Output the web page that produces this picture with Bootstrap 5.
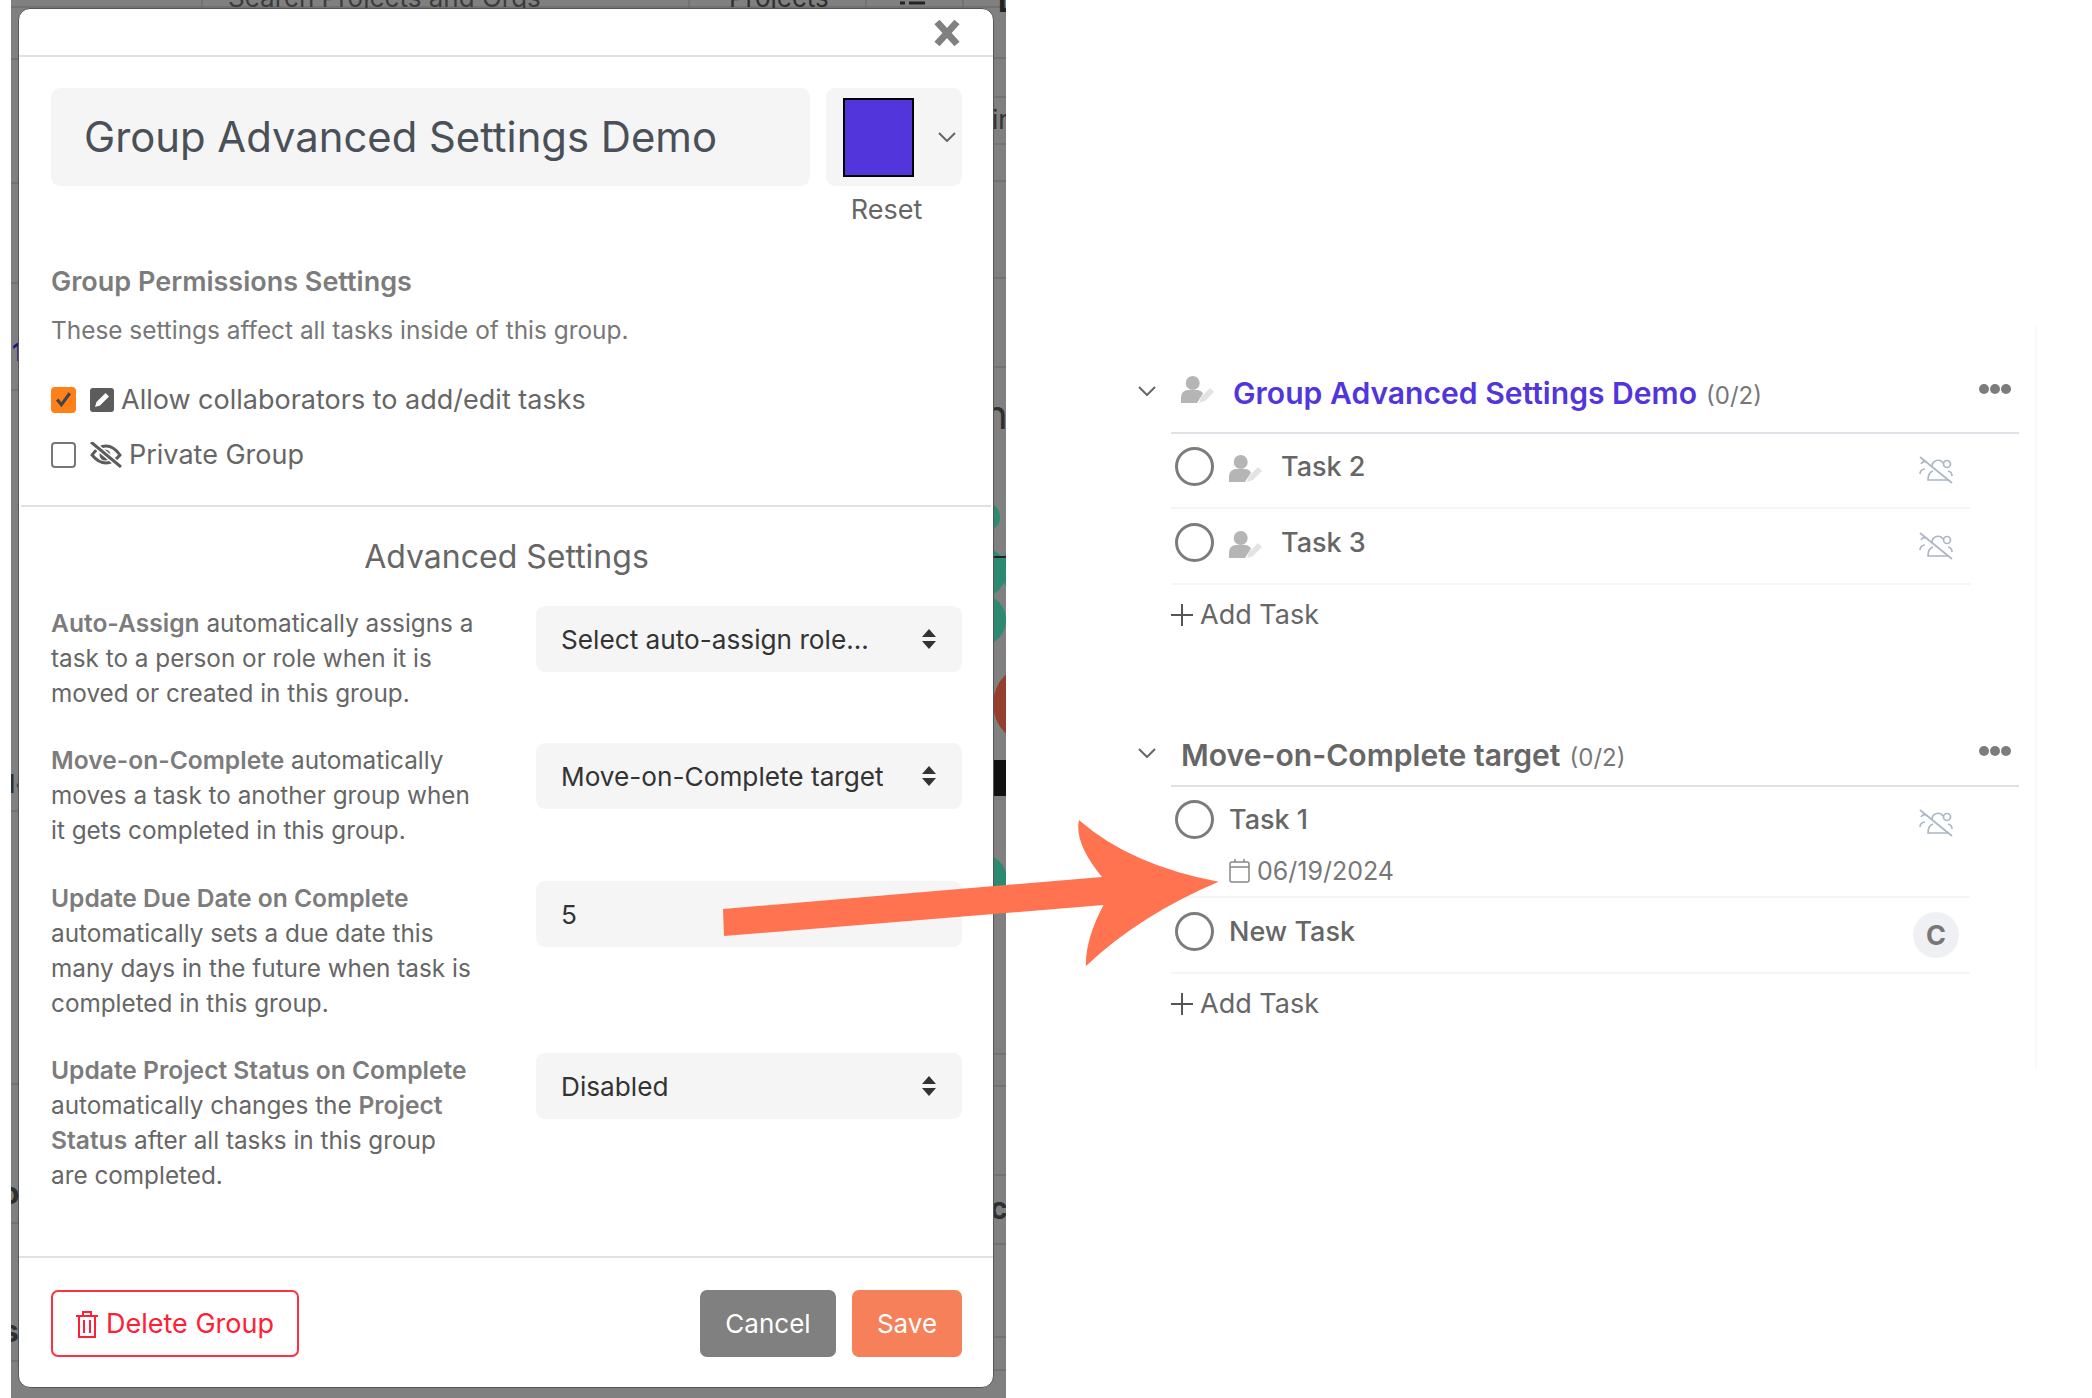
<!DOCTYPE html>
<html lang="en">
<head>
  <meta charset="UTF-8" />
  <meta name="viewport" content="width=device-width, initial-scale=1" />
  <title>Group Advanced Settings</title>
  <link href="https://cdn.jsdelivr.net/npm/bootstrap@5.3.0/dist/css/bootstrap.min.css" rel="stylesheet" />
  <style>
    html, body { height: 1398px; overflow: hidden; }
    body { font-family: Inter, "Liberation Sans", sans-serif; background: #fff; color: #666; font-size: 24.4px; line-height: 35px; }

    /* left half: dimmed page with the modal on top */
    .dim-panel { position: relative; flex: 0 0 995px; height: 1398px; margin-left: 11px; padding: 8px 12px 10px 7px; background: #808080; }
    .dim-art { position: absolute; left: 0; top: 0; width: 995px; height: 1398px; }
    .group-modal { height: 1380px; border: 1px solid #555; border-radius: 12px; background: #fff; overflow: hidden; }
    .group-modal .modal-header { height: 48px; padding: 1px 31px 0 0; justify-content: flex-end; border-bottom: 2px solid #dee2e6; border-radius: 0; }
    .close-x { line-height: 0; }
    .top-section { padding: 31px 31px 0 32px; height: 448px; }
    .title-box { flex: 1 1 auto; height: 98px; padding: 0 33px; background: #f5f5f5; border: 0; border-radius: 9px; color: #495057; font-size: 41.800px; line-height: 98px; }
    .swatch-col { flex: 0 0 136px; }
    .swatch-box { display: flex; align-items: center; height: 98px; padding-left: 17px; background: #f5f5f5; border-radius: 9px; gap: 24px; }
    .swatch-fill { width: 71px; height: 79px; background: #5235db; border: 2px solid #000; }
    .reset-link { margin-top: 6px; padding-right: 15px; text-align: center; font-size: 27px; }
    .perm-title { margin: 37px 0 14px; font-size: 27px; font-weight: 600; color: #7c7c7c; }
    .perm-note { margin-bottom: 34px; color: #777; }
    .perm-line { display: flex; align-items: center; height: 35px; margin-bottom: 20px; font-size: 27px; }
    .perm-line .form-check-input { flex: none; width: 25px; height: 26px; margin: 0 14px 0 0; border: 2px solid #777; border-radius: 4px; }
    .perm-line .form-check-input:checked { background-color: #fd8118; border-color: #fd8118; background-image: url("data:image/svg+xml,%3csvg xmlns='http://www.w3.org/2000/svg' viewBox='0 0 20 20'%3e%3cpath fill='none' stroke='%23444' stroke-width='3' d='M4 10l4 5 8-11'/%3e%3c/svg%3e"); }
    .perm-line label { display: flex; align-items: center; gap: 7px; }
    .adv-section { padding: 32px 29px 0 30px; border-top: 2px solid #dee2e6; margin: 0 2px; }
    .adv-title { margin-bottom: 32px; text-align: center; font-size: 32px; font-weight: 400; color: #666; }
    .setting-row { display: flex; justify-content: space-between; margin-bottom: 32px; }
    .setting-text { width: 425px; color: #666; font-size: 24.3px; line-height: 35.1px; }
    .setting-text b { font-size: 24.6px; line-height: 1; font-weight: 600; color: #7c7c7c; }
    .setting-field.form-select, .setting-field.form-control { flex: 0 0 426px; width: 426px; height: 66px; padding: 2px 25px 0; border: 0; border-radius: 9px; background-color: #f5f5f5; color: #333; font-size: 26.2px; line-height: 64px; }
    .setting-field.form-select { background-position: right 25px center; background-size: 16px 22px; background-image: url("data:image/svg+xml,%3csvg xmlns='http://www.w3.org/2000/svg' viewBox='0 0 16 22'%3e%3cpath fill='%23333' d='M8 1l7 8H1zM8 21l-7-8h14z'/%3e%3c/svg%3e"); }
    .group-modal .modal-footer { height: 131px; padding: 32px 31px 0 32px; align-items: flex-start; justify-content: space-between; border-top: 2px solid #dee2e6; border-radius: 0; --bs-modal-footer-gap: 0; }
    .foot-btn { height: 67px; padding: 0 24px; font-size: 26px; line-height: 1; border-radius: 7px; }
    .foot-delete { display: flex; align-items: center; gap: 7px; width: 248px; padding: 0 0 0 22px; border: 2px solid #ff2f45; color: #ff2036; background: #fff; font-size: 27px; white-space: nowrap; }
    .foot-cancel { width: 136px; background: #808080; border: 0; color: #fff; }
    .foot-save { width: 110px; background: #f5805a; border: 0; color: #fff; }

    /* right half: task groups */
    .board-panel { position: relative; flex: 1 1 auto; padding: 372px 73px 0 132px; }
    .board-edge { position: absolute; left: 1029px; top: 325px; width: 2px; height: 745px; background: #fafafa; }
    .group-chevron { flex: 0 0 33px; height: 42px; }
    .group-head { flex: 1 1 auto; display: flex; align-items: flex-start; padding-left: 10px; border-bottom: 2px solid #dee2e6; }
    .head-first { padding-bottom: 15px; }
    .head-second { padding-bottom: 6px; }
    .group-name { font-size: 30.100px; line-height: 42px; font-weight: 600; color: #666; }
    .name-accent { margin-left: 19px; color: #5235db; }
    .group-count { margin-left: 9px; font-size: 24px; font-weight: 400; color: #777; }
    .more-dots { margin-left: auto; margin-right: 8px; line-height: 0; padding-top: 12px; }
    .task-list { margin-left: 33px; margin-top: -1px; width: 799px; }
    .task-row { display: flex; align-items: flex-start; padding: 14px 17px 20px 4px; border-bottom: 2px solid #f5f5f5; }
    .task-tick { flex: none; width: 39px; height: 39px; border: 3px solid #7c7c7c; border-radius: 50%; }
    .task-name { font-size: 27px; font-weight: 500; line-height: 40px; color: #666; }
    .task-aside { margin-left: auto; padding-top: 9px; line-height: 0; }
    .task-date { display: flex; align-items: center; gap: 7px; margin-top: 13px; margin-bottom: -13px; font-size: 25px; line-height: 36px; color: #777; }
    .task-main { margin-left: 15px; }
    .assignee-glyph { margin: 8px 19px 0 15px; flex: none; }
    .assignee-chip { display: flex; align-items: center; justify-content: center; flex: none; width: 46px; height: 46px; margin: 0 -6px -6px auto; border-radius: 50%; background: #eef0f4; font-size: 27px; font-weight: 700; color: #777; }
    .add-task { display: flex; align-items: center; gap: 7px; margin: 12px 0 101px 33px; font-size: 27px; line-height: 36px; color: #666; }
    .arrow-over { position: absolute; left: 720px; top: 815px; width: 500px; height: 155px; z-index: 5; }
  </style>
</head>
<body>

  <svg width="0" height="0" class="position-absolute">
    <symbol id="ico-assign" viewBox="0 0 33 27">
      <circle cx="11.7" cy="7" r="7" fill="#b5b5b5" />
      <path d="M0 27v-6a7 7 0 0 1 7-7h9a7 7 0 0 1 6 3.500l-6 9.500z" fill="#b5b5b5" />
      <path d="M18 27l2-6 9-9 4 4-9 9z" fill="#e3e3e3" />
    </symbol>
    <symbol id="ico-nobody" viewBox="0 0 34 28">
      <g fill="none" stroke="#aab7c4" stroke-width="1.700">
        <path d="M1 1l32 26" />
        <path d="M13 10a6 6 0 0 1 11-3" />
        <path d="M14 15c-3 1-5 4-5 9h20v-1" />
        <circle cx="28" cy="8" r="3.500" />
        <path d="M29 15a5 5 0 0 1 4 5" />
        <path d="M2 8a4 4 0 0 1 5-2M1 18a5 5 0 0 1 5-5" />
      </g>
    </symbol>
    <symbol id="ico-chevron" viewBox="0 0 18 10">
      <path d="M1 1l8 8 8-8" fill="none" stroke="#666" stroke-width="2" />
    </symbol>
    <symbol id="ico-dots" viewBox="0 0 32 10">
      <circle cx="5" cy="5" r="5" fill="#7c7c7c" />
      <circle cx="16" cy="5" r="5" fill="#7c7c7c" />
      <circle cx="27" cy="5" r="5" fill="#7c7c7c" />
    </symbol>
    <symbol id="ico-plus" viewBox="0 0 22 22">
      <path d="M11 0v22M0 11h22" stroke="#555" stroke-width="2" />
    </symbol>
  </svg>

  <div class="d-flex">
    <div class="dim-panel">
      <!-- page behind the backdrop -->
      <svg class="dim-art" viewBox="11 0 995 1398" font-family="Inter, sans-serif" font-size="26" fill="#2f2f2f">
        <g stroke="#6e6e6e" stroke-width="1.500">
          <path d="M11 7H1006M11 59h8M11 183h8M11 283h8M11 390h8M11 811h8M11 1084h8M11 1223h8M11 1361h8" />
          <path d="M994 58h12M994 97h12M994 144h12M994 181h12M994 278h12M994 367h12M994 1054h12M994 1086h12M994 1175h12M994 1244h12M994 1337h12M994 1370h12" />
          <path d="M202 0v8M689 0v8M866 0v8M963 0v8" />
        </g>
        <text x="228" y="7" fill="#3c3c3c">Search Projects and Orgs</text>
        <text x="729" y="7">Projects</text>
        <path d="M900 3h5M909 3h16" stroke="#222" stroke-width="3" />
        <text x="992" y="129" fill="#333">ir</text>
        <text x="984" y="429" font-size="40">h</text>
        <text x="990" y="1219" font-size="30" font-weight="700">c</text>
        <text x="4" y="361" font-size="24" font-weight="700" fill="#1d1480">:1</text>
        <text x="8" y="793" font-size="26" font-weight="700">l&lt;</text>
        <text x="1" y="1204" font-size="30" font-weight="700">o</text>
        <text x="2" y="1342" font-size="30" font-weight="700">s</text>
        <text x="998" y="12" font-size="30" font-weight="700" fill="#222">L</text>
        <g fill="#2b8a70">
          <circle cx="985" cy="517" r="15" />
          <circle cx="980" cy="572" r="26" />
          <circle cx="1024" cy="570" r="24" />
          <circle cx="980" cy="620" r="26" />
          <circle cx="980" cy="880" r="27" />
        </g>
        <circle cx="1033" cy="704" r="40" fill="#95402c" />
        <rect x="994" y="760" width="12" height="36" fill="#111" />
        <path d="M994 557h12" stroke="#222" stroke-width="2" />
      </svg>

      <div class="modal-content group-modal">
        <div class="modal-header">
          <button type="button" class="btn p-0 border-0 close-x" aria-label="Close">
            <svg width="30" height="30" viewBox="0 0 30 30"><path d="M5 4l20 22M25 4L5 26" stroke="#808080" stroke-width="7" /></svg>
          </button>
        </div>
        <div class="modal-body p-0">
          <div class="top-section">
            <div class="d-flex gap-3">
              <div class="title-box">Group Advanced Settings Demo</div>
              <div class="swatch-col">
                <div class="swatch-box">
                  <div class="swatch-fill"></div>
                  <svg width="18" height="10"><use href="#ico-chevron" /></svg>
                </div>
                <div class="reset-link">Reset</div>
              </div>
            </div>
            <div class="perm-title">Group Permissions Settings</div>
            <div class="perm-note">These settings affect all tasks inside of this group.</div>
            <div class="perm-line">
              <input class="form-check-input" type="checkbox" id="allowEdit" checked />
              <label for="allowEdit">
                <svg width="24" height="24" viewBox="0 0 24 24"><rect width="24" height="24" rx="3" fill="#5c5c5c" /><path d="M5 19l1.500-5 9-9 3.500 3.500-9 9z" fill="#fff" /></svg>
                <span>Allow collaborators to add/edit tasks</span>
              </label>
            </div>
            <div class="perm-line">
              <input class="form-check-input" type="checkbox" id="privateGroup" />
              <label for="privateGroup">
                <svg width="32" height="26" viewBox="0 0 32 26">
                  <path d="M2 13C7 6 11 4 16 4s9 2 14 9c-5 6-9 8-14 8S7 19 2 13z" fill="none" stroke="#5c5c5c" stroke-width="3" />
                  <circle cx="15" cy="13" r="5.500" fill="#5c5c5c" />
                  <path d="M1 0l30 25" stroke="#fff" stroke-width="6" />
                  <path d="M1 0l30 25" stroke="#5c5c5c" stroke-width="3" />
                </svg>
                <span>Private Group</span>
              </label>
            </div>
          </div>

          <div class="adv-section">
            <div class="adv-title">Advanced Settings</div>
            <div class="setting-row">
              <div class="setting-text"><b>Auto-Assign</b> automatically assigns a task to a person or role when it is moved or created in this group.</div>
              <select class="form-select setting-field"><option>Select auto-assign role...</option></select>
            </div>
            <div class="setting-row">
              <div class="setting-text"><b>Move-on-Complete</b> automatically moves a task to another group when it gets completed in this group.</div>
              <select class="form-select setting-field"><option>Move-on-Complete target</option></select>
            </div>
            <div class="setting-row">
              <div class="setting-text"><b>Update Due Date on Complete</b> automatically sets a due date this many days in the future when task is completed in this group.</div>
              <div class="form-control setting-field">5</div>
            </div>
            <div class="setting-row">
              <div class="setting-text"><b>Update Project Status on Complete</b> automatically changes the <b>Project Status</b> after all tasks in this group are completed.</div>
              <select class="form-select setting-field"><option>Disabled</option></select>
            </div>
          </div>
        </div>
        <div class="modal-footer">
          <button type="button" class="btn foot-btn foot-delete">
            <svg width="24" height="28" viewBox="0 0 24 28" fill="none" stroke="#ff2036" stroke-width="2"><path d="M1 6h22M8 6V2h8v4M4 6v21h16V6M9 10v13M15 10v13" /></svg>
            <span>Delete Group</span>
          </button>
          <div class="d-flex gap-3">
            <button type="button" class="btn foot-btn foot-cancel">Cancel</button>
            <button type="button" class="btn foot-btn foot-save">Save</button>
          </div>
        </div>
      </div>
    </div>

    <div class="board-panel">
      <div class="board-edge"></div>

      <section>
        <div class="d-flex">
          <div class="group-chevron"><svg width="18" height="10"><use href="#ico-chevron" /></svg></div>
          <div class="group-head head-first">
            <svg width="33" height="27" class="mt-1"><use href="#ico-assign" /></svg>
            <div class="group-name name-accent">Group Advanced Settings Demo<span class="group-count">(0/2)</span></div>
            <div class="more-dots"><svg width="32" height="10"><use href="#ico-dots" /></svg></div>
          </div>
        </div>
        <div class="task-list">
          <div class="task-row">
            <div class="task-tick"></div>
            <svg width="33" height="27" class="assignee-glyph"><use href="#ico-assign" /></svg>
            <div class="task-name">Task 2</div>
            <div class="task-aside"><svg width="34" height="28"><use href="#ico-nobody" /></svg></div>
          </div>
          <div class="task-row">
            <div class="task-tick"></div>
            <svg width="33" height="27" class="assignee-glyph"><use href="#ico-assign" /></svg>
            <div class="task-name">Task 3</div>
            <div class="task-aside"><svg width="34" height="28"><use href="#ico-nobody" /></svg></div>
          </div>
        </div>
        <div class="add-task"><svg width="22" height="22"><use href="#ico-plus" /></svg><span>Add Task</span></div>
      </section>

      <section>
        <div class="d-flex">
          <div class="group-chevron"><svg width="18" height="10"><use href="#ico-chevron" /></svg></div>
          <div class="group-head head-second">
            <div class="group-name">Move-on-Complete target<span class="group-count">(0/2)</span></div>
            <div class="more-dots"><svg width="32" height="10"><use href="#ico-dots" /></svg></div>
          </div>
        </div>
        <div class="task-list">
          <div class="task-row">
            <div class="task-tick"></div>
            <div class="task-main">
              <div class="task-name">Task 1</div>
              <div class="task-date">
                <svg width="21" height="24" viewBox="0 0 21 24" fill="none" stroke="#888" stroke-width="1.500"><rect x="1" y="3" width="19" height="20" rx="2" /><path d="M1 8h19M6 0v3M15 0v3" /></svg>
                <span>06/19/2024</span>
              </div>
            </div>
            <div class="task-aside"><svg width="34" height="28"><use href="#ico-nobody" /></svg></div>
          </div>
          <div class="task-row">
            <div class="task-tick"></div>
            <div class="task-main"><div class="task-name">New Task</div></div>
            <div class="assignee-chip">C</div>
          </div>
        </div>
        <div class="add-task"><svg width="22" height="22"><use href="#ico-plus" /></svg><span>Add Task</span></div>
      </section>
    </div>
  </div>

  <!-- annotation arrow drawn over both halves -->
  <svg class="arrow-over" viewBox="720 815 500 155">
    <path d="M723 909L1102 877Q1074 843 1079 820Q1130 865 1218.600 881.800Q1140 915 1086 966Q1085 940 1103.500 905L724 936Z" fill="#ff7350" />
  </svg>

  <script src="https://cdn.jsdelivr.net/npm/bootstrap@5.3.0/dist/js/bootstrap.bundle.min.js"></script>
</body>
</html>
